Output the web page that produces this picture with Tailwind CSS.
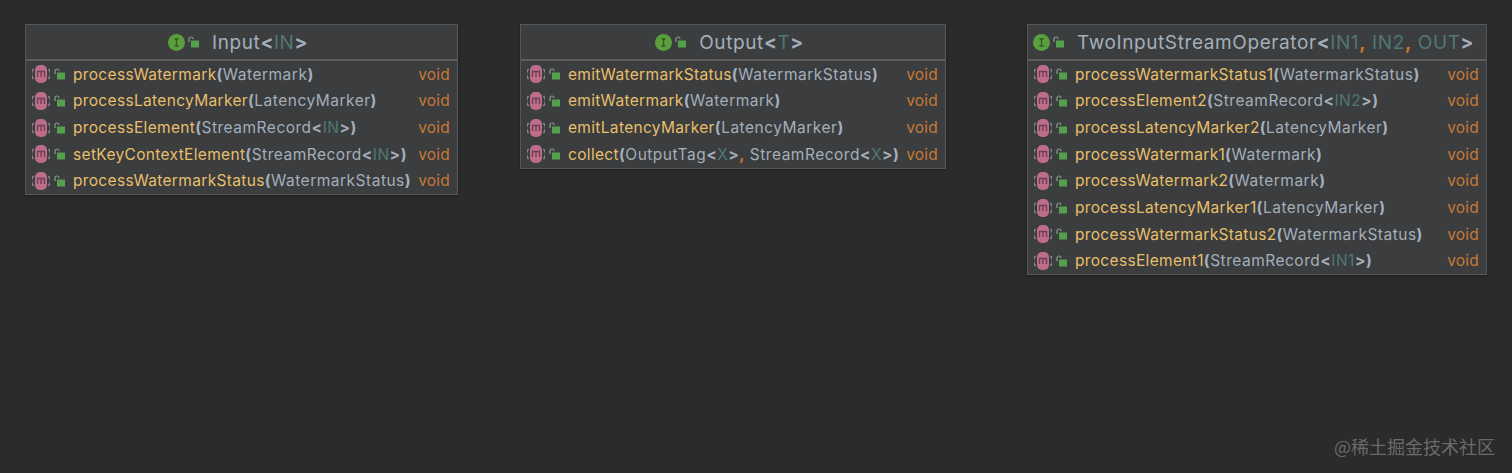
<!DOCTYPE html>
<html lang="en">
<head>
    <meta charset="UTF-8">
    <meta name="viewport" content="width=device-width, initial-scale=1.0">
    <title>Class diagram</title>
    <script src="https://cdn.jsdelivr.net/npm/@tailwindcss/browser@4"></script>
</head>
<body class="relative h-[473px] overflow-hidden bg-[#2b2b2b] font-['Inter','Liberation_Sans',sans-serif] text-[#a3afba]">
    <div id="diagram" class="flex items-start pl-[25px] pt-6">
        <!-- Cards are populated by JavaScript -->
    </div>

    <div class="absolute right-[17px] bottom-[15px] font-['Noto_Sans_CJK_SC',sans-serif] text-[18px] leading-6 text-[#6a6a6a]">@稀土掘金技术社区</div>

    <script>
        const lock = (cls) => `
            <svg class="${cls}" width="12" height="12" viewBox="0 0 12 12">
                <path d="M1 6V3a2 2 0 0 1 4 0" fill="none" stroke="#88a088" stroke-width="1.2"/>
                <rect x="3" y="4.5" width="8" height="7" fill="#55a04c"/>
            </svg>`;

        const methodIcon = `
            <svg class="shrink-0" width="18" height="20" viewBox="0 0 18 20">
                <path d="M1.5 5A8 8 0 0 0 1.5 15M16.5 5A8 8 0 0 1 16.5 15" fill="none" stroke="#8f8f8f" stroke-width="1.3"/>
                <rect x="3" y="1" width="12" height="18" rx="5" fill="#bd6d8a"/>
                <path d="M5.5 13V7.5h7V13M9 7.5V13" fill="none" stroke="#6e4053" stroke-width="1.3"/>
            </svg>`;

        const interfaceIcon = `
            <svg class="shrink-0" width="17" height="17" viewBox="0 0 17 17">
                <circle cx="8.5" cy="8.5" r="8.5" fill="#5a9e3e"/>
                <path d="M6.5 5h4M6.5 12h4M8.5 5v7" fill="none" stroke="#2f5a24" stroke-width="1.3"/>
            </svg>`;

        // wrap generic names and punctuation in their colours
        const paint = (text) => text
            .replace(/[<>()]/g, (c) => `<b class="font-bold">${c.replace('<', '&lt;').replace('>', '&gt;')}</b>`)
            .replace(/\b(IN1|IN2|IN|OUT|T|X)\b/g, '<span class="text-[#507874]">$1</span>')
            .replace(/,/g, '<span class="font-bold text-[#cc7832]">,</span>');

        const cards = [
            { title: 'Input<IN>', width: 'w-[433px]', margin: 'mr-[62px]', methods: [
                ['processWatermark', '(Watermark)'],
                ['processLatencyMarker', '(LatencyMarker)'],
                ['processElement', '(StreamRecord<IN>)'],
                ['setKeyContextElement', '(StreamRecord<IN>)'],
                ['processWatermarkStatus', '(WatermarkStatus)'],
            ]},
            { title: 'Output<T>', width: 'w-[426px]', margin: 'mr-[81px]', methods: [
                ['emitWatermarkStatus', '(WatermarkStatus)'],
                ['emitWatermark', '(Watermark)'],
                ['emitLatencyMarker', '(LatencyMarker)'],
                ['collect', '(OutputTag<X>, StreamRecord<X>)'],
            ]},
            { title: 'TwoInputStreamOperator<IN1, IN2, OUT>', width: 'w-[460px]', margin: '', methods: [
                ['processWatermarkStatus1', '(WatermarkStatus)'],
                ['processElement2', '(StreamRecord<IN2>)'],
                ['processLatencyMarker2', '(LatencyMarker)'],
                ['processWatermark1', '(Watermark)'],
                ['processWatermark2', '(Watermark)'],
                ['processLatencyMarker1', '(LatencyMarker)'],
                ['processWatermarkStatus2', '(WatermarkStatus)'],
                ['processElement1', '(StreamRecord<IN1>)'],
            ]},
        ];

        document.getElementById('diagram').innerHTML = cards.map((card) => `
            <div class="${card.width} ${card.margin} shrink-0 border border-[#55585a] bg-[#3b3d3f] shadow-[0_1px_3px_rgba(0,0,0,0.3)]">
                <div class="flex h-[36px] items-center justify-center border-b-2 border-[#5b5d5f] pr-[7px] text-[19px]">
                    ${interfaceIcon}
                    ${lock('ml-[3px] mr-[12px] shrink-0')}
                    <span class="mt-[3px] whitespace-nowrap tracking-[0.6px]">${paint(card.title)}</span>
                </div>
                ${card.methods.map(([name, args]) => `
                    <div class="flex h-[26.65px] items-center pl-[6px] pr-[7px] text-[15.5px]">
                        ${methodIcon}
                        ${lock('ml-[4px] mr-[7px] shrink-0')}
                        <span class="whitespace-nowrap tracking-[0.33px] text-[#e8bf6a]">${name}</span>
                        <span class="whitespace-nowrap tracking-[0.5px]">${paint(args)}</span>
                        <span class="ml-auto tracking-[0.2px] text-[#c77a35]">void</span>
                    </div>`).join('')}
            </div>`).join('');
    </script>
</body>
</html>
